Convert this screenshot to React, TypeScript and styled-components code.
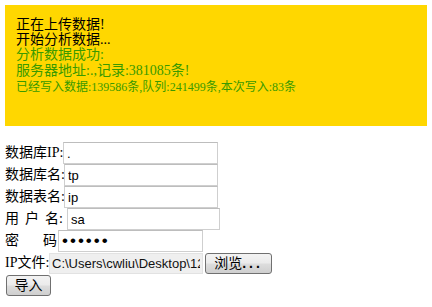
import React from "react";
import styled, { createGlobalStyle } from "styled-components";

const Global = createGlobalStyle`
  body {
    margin: 5px;
    background: #ffffff;
    color: #000000;
    font-family: "Liberation Serif", "Noto Sans CJK SC", serif;
    font-size: 14px;
  }
`;

const Banner = styled.div`
  background: #ffd700;
  height: 121px;
  box-sizing: border-box;
  padding: 12px 11px 0;
`;

const Line = styled.div<{ $green?: boolean; $size: number; $h: number }>`
  color: ${(p) => (p.$green ? "#3a9a00" : "#000000")};
  font-size: ${(p) => p.$size}px;
  line-height: ${(p) => p.$h}px;
  white-space: nowrap;
`;

const Form = styled.form`
  margin: 16px 0 0;
`;

const Row = styled.div`
  display: flex;
  align-items: center;
  height: 22px;
`;

const Label = styled.span<{ $w: number }>`
  display: inline-flex;
  width: ${(p) => p.$w}px;
  white-space: nowrap;
  font-size: 14px;
  line-height: 22px;
`;

const Gap = styled.span<{ $w: number }>`
  display: inline-block;
  width: ${(p) => p.$w}px;
`;

const Field = styled.input<{ $w: number }>`
  width: ${(p) => p.$w}px;
  height: 22px;
  box-sizing: border-box;
  margin: 0;
  padding: 0 3px;
  border: 1px solid #cfcfcf;
  border-top-color: #bdbdbd;
  background: #ffffff;
  color: #000000;
  font-family: "Liberation Sans", Arial, sans-serif;
  font-size: 13px;
  outline: none;
`;

const Secret = styled(Field)`
  font-size: 17px;
  letter-spacing: 2px;
`;

const FilePath = styled(Field)`
  height: 21px;
  background: #efefef;
  border-color: #e2e2e2;
  padding: 0 2px;
  color: #111111;
`;

const Button = styled.button<{ $w: number; $ml: number }>`
  width: ${(p) => p.$w}px;
  height: 21px;
  margin: 0 0 0 ${(p) => p.$ml}px;
  padding: 0;
  box-sizing: border-box;
  border: 1px solid #707070;
  border-radius: 3px;
  background: linear-gradient(#f3f3f3 0%, #ebebeb 48%, #dddddd 52%, #cfcfcf 100%);
  color: #000000;
  font-family: "Liberation Sans", "Noto Sans CJK SC", sans-serif;
  font-size: 14px;
  line-height: 19px;
  font-weight: 400;
`;

const Dots = styled.span`
  letter-spacing: 3px;
  font-weight: 700;
`;

export default function App() {
  return (
    <>
      <Global />
      <Banner>
        <Line $size={14} $h={15}>正在上传数据!</Line>
        <Line $size={14} $h={15}>开始分析数据...</Line>
        <Line $green $size={14} $h={16}>分析数据成功:</Line>
        <Line $green $size={14} $h={16}>服务器地址:.,记录:381085条!</Line>
        <Line $green $size={12} $h={16}>已经写入数据:139586条,队列:241499条,本次写入:83条</Line>
      </Banner>
      <Form onSubmit={(e) => e.preventDefault()}>
        <Row>
          <Label $w={58}>数据库IP:</Label>
          <Field $w={155} defaultValue="." />
        </Row>
        <Row>
          <Label $w={59}>数据库名:</Label>
          <Field $w={154} defaultValue="tp" />
        </Row>
        <Row>
          <Label $w={59}>数据表名:</Label>
          <Field $w={154} defaultValue="ip" />
        </Row>
        <Row>
          <Label $w={62}>
            用<Gap $w={6} />户<Gap $w={6} />名:
          </Label>
          <Field $w={153} defaultValue="sa" />
        </Row>
        <Row>
          <Label $w={53}>
            密<Gap $w={24} />码
          </Label>
          <Secret $w={145} type="password" defaultValue="123456" />
        </Row>
        <Row>
          <Label $w={44}>IP文件:</Label>
          <FilePath $w={154} readOnly value="C:\Users\cwliu\Desktop\12.txt" />
          <Button type="button" $w={67} $ml={2}>
            浏览<Dots>...</Dots>
          </Button>
        </Row>
        <Row>
          <Button type="submit" $w={45} $ml={1}>导入</Button>
        </Row>
      </Form>
    </>
  );
}
